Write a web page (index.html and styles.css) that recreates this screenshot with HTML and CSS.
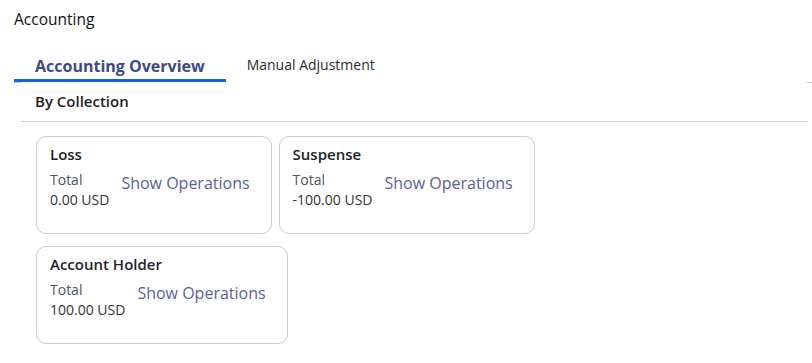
FILE: index.html
```html
<!DOCTYPE html>
<html>
<head>
<title>Accounting</title>
    <link rel="stylesheet" href="styles.css">
</head>
<body>
<div class="page">
  <div class="page-title">Accounting</div>

  <div class="tabs">
    <div class="tab-edge"></div>
    <div class="tab active">Accounting Overview</div>
    <div class="tab">Manual Adjustment</div>
    <div class="tab-space"></div>
    <div class="tab-edge right"></div>
  </div>

  <div class="section-title">By Collection</div>
  <div class="divider"></div>

  <div class="cards">
    <div class="card-row">
      <div class="card">
        <div class="card-title">Loss</div>
        <div class="card-body">
          <div class="amount">
            <div class="label">Total</div>
            <div class="value">0.00 USD</div>
          </div>
          <a class="ops">Show Operations</a>
        </div>
      </div>
      <div class="card">
        <div class="card-title">Suspense</div>
        <div class="card-body">
          <div class="amount">
            <div class="label">Total</div>
            <div class="value">-100.00 USD</div>
          </div>
          <a class="ops">Show Operations</a>
        </div>
      </div>
    </div>
    <div class="card-row">
      <div class="card">
        <div class="card-title">Account Holder</div>
        <div class="card-body">
          <div class="amount">
            <div class="label">Total</div>
            <div class="value">100.00 USD</div>
          </div>
          <a class="ops">Show Operations</a>
        </div>
      </div>
    </div>
  </div>
</div>
</body>
</html>
```

FILE: styles.css
```css
body {
  margin: 0;
  background-color: white;
  font-family: "Open Sans", Arial, sans-serif;
  color: #222;
}

.page {
  padding: 9px 0 0 14px;
}

.page-title {
  font-size: 15.5px;
  line-height: 21px;
  color: #111;
}

.tabs {
  display: flex;
  align-items: flex-start;
  margin-top: 26px;
  position: relative;
}

.tab {
  padding: 0 21px 3px;
  font-size: 14px;
  line-height: 20px;
  color: #2b2b2b;
  margin-top: -1px;
}

.tab.active {
  font-size: 16px;
  font-weight: bold;
  color: #3c4a8a;
  margin-top: 0;
  border-bottom: 3px solid #0f62e6;
}

.tab-space {
  flex: 1;
}

.tab-edge {
  position: absolute;
  left: 0;
  top: 26px;
  width: 7px;
  border-bottom: 1px solid #c4c8d4;
}

.tab-edge.right {
  left: auto;
  right: 0;
  width: 5px;
}

.section-title {
  margin-top: 9px;
  padding-left: 21px;
  font-size: 15px;
  font-weight: 600;
  line-height: 20px;
  color: #1f1f1f;
}

.divider {
  margin: 10px 5px 0 7px;
  border-top: 1px solid #cfcfcf;
}

.cards {
  margin: 14px 0 0 22px;
  display: flex;
  flex-direction: column;
  gap: 12px;
}

.card-row {
  display: flex;
  gap: 7px;
}

.card {
  border: 1px solid #cbcbd2;
  border-radius: 10px;
  padding: 7px 21px 23px 13px;
}

.card-title {
  font-size: 15px;
  font-weight: 600;
  line-height: 20px;
  color: #1e1e2d;
}

.card-body {
  display: flex;
  align-items: flex-start;
  gap: 12px;
  margin-top: 6px;
}

.amount {
  font-size: 14px;
  line-height: 20px;
}

.label {
  color: #4b5468;
}

.value {
  color: #333;
}

.ops {
  margin-top: 2px;
  font-size: 16px;
  line-height: 22px;
  color: #5661a3;
  cursor: pointer;
}
```
